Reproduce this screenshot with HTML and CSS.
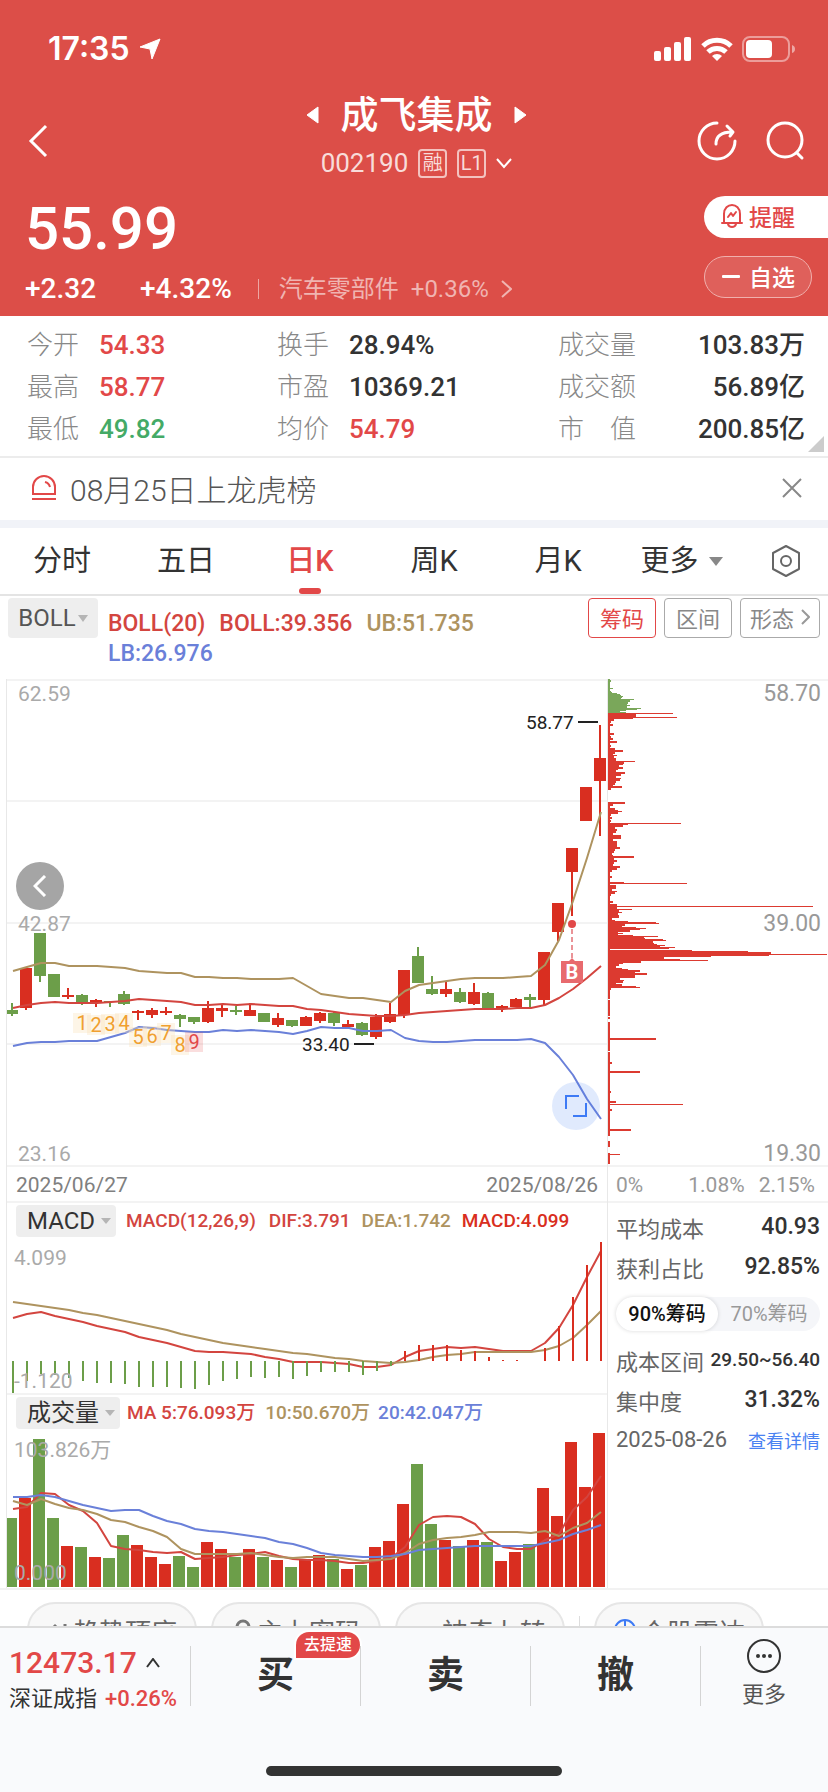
FILE: index.html
```html
<!DOCTYPE html>
<html lang="zh-CN">

<head>
    <meta charset="UTF-8">
    <meta name="viewport" content="width=device-width, initial-scale=1.0">
    <title>成飞集成 002190</title>
    <link rel="stylesheet" href="styles.css">
</head>

<body>
    <header class="header">
        <div class="status-bar">
            <div class="status-time">
                <span>17:35</span>
                <svg width="22" height="22" viewBox="0 0 22 22"><path d="M21 1 L13 21 L11 11 L1 9 Z" fill="#fff" stroke="#fff" stroke-width="1" stroke-linejoin="round"/></svg>
            </div>
            <div class="status-icons">
                <svg width="38" height="24" viewBox="0 0 38 24" fill="#fff">
                    <rect x="0" y="14" width="7" height="10" rx="2"/>
                    <rect x="10" y="10" width="7" height="14" rx="2"/>
                    <rect x="20" y="5" width="7" height="19" rx="2"/>
                    <rect x="30" y="0" width="7" height="24" rx="2"/>
                </svg>
                <svg width="32" height="24" viewBox="0 0 32 24" fill="none" stroke="#fff" stroke-width="5">
                    <path d="M2 9 A20 20 0 0 1 30 9"/>
                    <path d="M7 15 A13 13 0 0 1 25 15"/>
                    <path d="M16 24 L11 19 A7 7 0 0 1 21 19 Z" fill="#fff" stroke="none"/>
                </svg>
                <svg width="54" height="26" viewBox="0 0 54 26">
                    <rect x="1" y="1" width="46" height="24" rx="7" fill="none" stroke="#fff" stroke-opacity=".45" stroke-width="2"/>
                    <rect x="4" y="4" width="26" height="18" rx="4" fill="#fff"/>
                    <path d="M50 9 Q53 10 53 13 Q53 16 50 17 Z" fill="#fff" fill-opacity=".5"/>
                </svg>
            </div>
        </div>

        <div class="title-row">
            <button class="icon-btn" aria-label="返回">
                <svg width="20" height="34" viewBox="0 0 20 34" fill="none" stroke="#fff" stroke-width="3"><path d="M18 2 L3 17 L18 32"/></svg>
            </button>
            <div class="title">
                <div class="title-name">
                    <svg width="14" height="18" viewBox="0 0 14 18"><path d="M12 1 V17 L1 9 Z" fill="#fff" stroke="#fff" stroke-linejoin="round"/></svg>
                    <h1>成飞集成</h1>
                    <svg width="14" height="18" viewBox="0 0 14 18"><path d="M2 1 V17 L13 9 Z" fill="#fff" stroke="#fff" stroke-linejoin="round"/></svg>
                </div>
                <div class="title-code">
                    <span>002190</span>
                    <span class="tag">融</span>
                    <span class="tag">L1</span>
                    <svg width="16" height="11" viewBox="0 0 16 11" fill="none" stroke="#fff" stroke-width="2"><path d="M1 1 L8 9 L15 1"/></svg>
                </div>
            </div>
            <div class="title-actions">
                <button class="icon-btn" aria-label="分享">
                    <svg width="40" height="40" viewBox="0 0 40 40" fill="none" stroke="#fff" stroke-width="3" stroke-linecap="round" stroke-linejoin="round">
                        <path d="M20 2 A18 18 0 1 0 38 20"/>
                        <path d="M19 23 C19 14 25 11 35 11 M30 5 L36 11 L33 15"/>
                    </svg>
                </button>
                <button class="icon-btn" aria-label="搜索">
                    <svg width="40" height="40" viewBox="0 0 40 40" fill="none" stroke="#fff" stroke-width="3" stroke-linecap="round"><circle cx="20" cy="19" r="17"/><path d="M32 32 L37 37"/></svg>
                </button>
            </div>
        </div>

        <div class="quote">
            <div class="quote-main">
                <div class="price">55.99</div>
                <div class="change">
                    <span>+2.32</span>
                    <span class="change-pct">+4.32%</span>
                    <a href="#sector" class="sector">
                        <span>汽车零部件</span>
                        <span>+0.36%</span>
                        <svg width="11" height="18" viewBox="0 0 11 18" fill="none" stroke="currentColor" stroke-width="2"><path d="M1 1 L10 9 L1 17"/></svg>
                    </a>
                </div>
            </div>
            <div class="quote-actions">
                <button class="alert-btn">
                    <svg width="22" height="24" viewBox="0 0 22 24" fill="none" stroke="#e24848" stroke-width="2" stroke-linecap="round" stroke-linejoin="round">
                        <path d="M1 19 H21 M3 19 V10 C3 -2 19 -2 19 10 V19 M7 20 C8 24 14 24 15 20"/>
                        <path d="M7 13 L10 9 L12 12 L15 8"/>
                    </svg>
                    提醒
                </button>
                <button class="watch-btn">
                    <svg width="18" height="4" viewBox="0 0 18 4"><rect width="18" height="3" y="1" rx="1" fill="#fff"/></svg>
                    自选
                </button>
            </div>
        </div>
    </header>

    <main>
        <dl class="stats">
            <div><dt>今开</dt><dd class="up">54.33</dd></div>
            <div><dt>换手</dt><dd>28.94%</dd></div>
            <div class="wide"><dt>成交量</dt><dd>103.83万</dd></div>
            <div><dt>最高</dt><dd class="up">58.77</dd></div>
            <div><dt>市盈</dt><dd>10369.21</dd></div>
            <div class="wide"><dt>成交额</dt><dd>56.89亿</dd></div>
            <div><dt>最低</dt><dd class="down">49.82</dd></div>
            <div><dt>均价</dt><dd class="up">54.79</dd></div>
            <div class="wide"><dt>市　值</dt><dd>200.85亿</dd></div>
        </dl>

        <div class="notice">
            <svg width="26" height="26" viewBox="0 0 26 26" fill="none" stroke="#e24848" stroke-width="2">
                <path d="M2 19 V12 A11 11 0 0 1 24 12 V19 Z M1 24 H25"/>
                <path d="M14 7 Q18 8 19 12"/>
            </svg>
            <span>08月25日上龙虎榜</span>
            <button class="icon-btn" aria-label="关闭">
                <svg width="20" height="20" viewBox="0 0 20 20" stroke="#888" stroke-width="2"><path d="M1 1 L19 19 M19 1 L1 19"/></svg>
            </button>
        </div>

        <nav class="tabs">
            <a href="#minute">分时</a>
            <a href="#five">五日</a>
            <a href="#day" class="active">日K</a>
            <a href="#week">周K</a>
            <a href="#month">月K</a>
            <a href="#more">更多<svg width="16" height="11" viewBox="0 0 16 11"><path d="M1 1 H15 L8 10 Z" fill="#888"/></svg></a>
            <button class="icon-btn" aria-label="设置">
                <svg width="30" height="32" viewBox="0 0 30 32" fill="none" stroke="#666" stroke-width="2" stroke-linejoin="round"><path d="M15 1 L28 8 V24 L15 31 L2 24 V8 Z"/><circle cx="15" cy="16" r="5"/></svg>
            </button>
        </nav>

        <div class="toolbar">
            <button class="picker boll">BOLL<svg width="10" height="7" viewBox="0 0 10 7"><path d="M0 0 H10 L5 7 Z" fill="#b5b5b5"/></svg></button>
            <div class="boll-values">
                <span class="c-red">BOLL(20)</span>
                <span class="c-red">BOLL:39.356</span>
                <span class="c-tan">UB:51.735</span>
                <span class="c-blue">LB:26.976</span>
            </div>
            <div class="toolbar-btns">
                <button class="active">筹码</button>
                <button>区间</button>
                <button>形态 <svg width="9" height="16" viewBox="0 0 9 16" fill="none" stroke="#999" stroke-width="2"><path d="M1 1 L8 8 L1 15"/></svg></button>
            </div>
        </div>

        <section class="board">
            <div class="panels">
                <div class="kline">
                    <svg class="chart" viewBox="7 0 600 488">
                        <g class="grid"><path d="M7 1 H607 M7 122 H607 M7 244 H607 M7 365 H607 M7 487 H607"/></g>
                        <g id="candles"></g>
                        <g id="kLines"></g>
                        <g id="nineTurn"></g>
                        <g class="axis">
                            <text x="18" y="22">62.59</text>
                            <text x="18" y="252">42.87</text>
                            <text x="18" y="482">23.16</text>
                        </g>
                        <g class="mark">
                            <text x="526" y="50">58.77</text>
                            <path d="M578 43 H598"/>
                            <text x="302" y="372">33.40</text>
                            <path d="M354 365 H374"/>
                        </g>
                        <path d="M572 250 V282" stroke="#ea9397" stroke-width="2" stroke-dasharray="5 3"/>
                        <circle cx="572" cy="245" r="4" fill="#e24848"/>
                        <path d="M561 282 H569 L572 279 L575 282 H583 V304 H561 Z" fill="#e86a6e"/>
                        <text x="572" y="300" class="buy-mark">B</text>
                    </svg>
                    <button class="round prev" aria-label="向前">
                        <svg width="14" height="22" viewBox="0 0 14 22" fill="none" stroke="#fff" stroke-width="3"><path d="M12 1 L2 11 L12 21"/></svg>
                    </button>
                    <button class="round expand" aria-label="全屏">
                        <svg width="22" height="22" viewBox="0 0 22 22" fill="none" stroke="#3d7af5" stroke-width="2"><path d="M1 14 V1 H14 M8 21 H21 V8"/></svg>
                    </button>
                </div>
                <div class="dates">
                    <span>2025/06/27</span>
                    <span>2025/08/26</span>
                </div>

                <div class="sub-panel">
                    <div class="legend">
                        <button class="picker">MACD<svg width="10" height="6" viewBox="0 0 10 6"><path d="M0 0 H10 L5 6 Z" fill="#b5b5b5"/></svg></button>
                        <span class="c-red">MACD(12,26,9)</span>
                        <span class="c-red">DIF:3.791</span>
                        <span class="c-tan">DEA:1.742</span>
                        <span class="c-up">MACD:4.099</span>
                    </div>
                    <svg class="chart" viewBox="7 36 600 154">
                        <g id="macd"></g>
                        <g class="axis">
                            <text x="14" y="62">4.099</text>
                            <text x="14" y="185">-1.120</text>
                        </g>
                    </svg>
                </div>

                <div class="sub-panel">
                    <div class="legend volume-legend">
                        <button class="picker">成交量<svg width="10" height="6" viewBox="0 0 10 6"><path d="M0 0 H10 L5 6 Z" fill="#b5b5b5"/></svg></button>
                        <span class="c-red">MA 5:76.093万</span>
                        <span class="c-tan">10:50.670万</span>
                        <span class="c-blue">20:42.047万</span>
                    </div>
                    <svg class="chart" viewBox="7 36 600 157">
                        <g id="volume"></g>
                        <g class="axis">
                            <text x="14" y="62">103.826万</text>
                            <text x="14" y="185">0.000</text>
                        </g>
                    </svg>
                </div>
            </div>

            <div class="chips">
                <svg class="chart" viewBox="0 0 220 488">
                    <g class="grid"><path d="M0 1 H220 M0 487 H220"/></g>
                    <g id="chipRows"></g>
                    <g class="axis chip-axis">
                        <text x="213" y="22">58.70</text>
                        <text x="213" y="252">39.00</text>
                        <text x="213" y="482">19.30</text>
                    </g>
                </svg>
                <div class="chip-scale">
                    <span>0%</span>
                    <span>1.08%</span>
                    <span>2.15%</span>
                </div>
                <div class="chip-info">
                    <div class="row"><span>平均成本</span><b>40.93</b></div>
                    <div class="row"><span>获利占比</span><b>92.85%</b></div>
                    <div class="switch">
                        <button class="active">90%筹码</button>
                        <button>70%筹码</button>
                    </div>
                    <div class="row"><span>成本区间</span><b class="small">29.50~56.40</b></div>
                    <div class="row"><span>集中度</span><b>31.32%</b></div>
                    <div class="row"><span>2025-08-26</span><a href="#detail">查看详情</a></div>
                </div>
            </div>
        </section>

        <div class="pills">
            <button><svg width="22" height="24" viewBox="0 0 22 24" fill="none" stroke="#777" stroke-width="3"><path d="M2 14 L8 8 L14 14 M8 9 V22 M18 6 V22"/></svg>趋势顶底</button>
            <button><svg width="22" height="24" viewBox="0 0 22 24" fill="none" stroke="#777" stroke-width="3"><circle cx="12" cy="9" r="6"/><path d="M12 15 V23"/></svg>主力密码</button>
            <button><svg width="24" height="24" viewBox="0 0 24 24" fill="none" stroke="#3d7af5" stroke-width="3"><path d="M1 11 H7 L12 18 L17 11 H23"/></svg>神奇九转</button>
            <i class="divider"></i>
            <button><svg width="24" height="24" viewBox="0 0 24 24" fill="none" stroke="#3d7af5" stroke-width="2"><circle cx="12" cy="12" r="10"/><path d="M12 2 V12 M6 12 H18"/></svg>个股雷达</button>
        </div>
    </main>

    <footer class="footer">
        <div class="trade-bar">
            <div class="index">
                <div class="index-value">12473.17<svg width="14" height="10" viewBox="0 0 14 10" fill="none" stroke="#333" stroke-width="2"><path d="M1 9 L7 1 L13 9"/></svg></div>
                <div class="index-name">深证成指<span class="up">+0.26%</span></div>
            </div>
            <button class="trade">买<span class="badge">去提速</span></button>
            <button class="trade">卖</button>
            <button class="trade">撤</button>
            <button class="more">
                <svg width="34" height="34" viewBox="0 0 34 34" fill="none" stroke="#333" stroke-width="2"><circle cx="17" cy="17" r="16"/><g fill="#333" stroke="none"><circle cx="11" cy="17" r="2"/><circle cx="17" cy="17" r="2"/><circle cx="23" cy="17" r="2"/></g></svg>
                更多
            </button>
        </div>
        <div class="home-bar"></div>
    </footer>

    <script src="script.js"></script>
</body>

</html>
```

FILE: styles.css
```css
* {
    box-sizing: border-box;
}

body {
    font-family: Roboto, "Noto Sans CJK SC", sans-serif;
    margin: 0;
    height: 100vh;
    display: flex;
    flex-direction: column;
    background-color: #fff;
    color: #333;
}

button {
    font-family: inherit;
    padding: 0;
    border: none;
    background: none;
    color: inherit;
    cursor: pointer;
}

a {
    color: inherit;
    text-decoration: none;
}

svg {
    display: block;
    flex: none;
}

main {
    flex: 1;
    min-height: 0;
    overflow: hidden auto;
    scrollbar-width: none;
}

.up {
    color: #e24848;
}

.down {
    color: #44aa66;
}

.c-red {
    color: #d3453f;
}

.c-tan {
    color: #ae935f;
}

.c-blue {
    color: #6a80d9;
}

.c-up {
    color: #d92e20;
}

/* Header */
.header {
    flex: none;
    background-color: #dc4e48;
    color: #fff;
}

.status-bar {
    display: flex;
    justify-content: space-between;
    align-items: center;
    height: 88px;
    padding: 10px 32px 0 48px;
}

.status-time {
    display: flex;
    align-items: center;
    gap: 9px;
    font: 600 32px/1 Inter, sans-serif;
}

.status-icons {
    display: flex;
    align-items: center;
    gap: 9px;
}

.title-row {
    display: grid;
    grid-template-columns: 1fr auto 1fr;
    align-items: center;
    padding: 0 23px 0 28px;
}

.icon-btn {
    display: flex;
    align-items: center;
    justify-content: center;
}

.title-row > .icon-btn {
    justify-self: start;
    padding-top: 10px;
}

.title-name {
    display: flex;
    align-items: center;
    justify-content: center;
    gap: 20px;
    height: 54px;
}

.title-name h1 {
    margin: 0;
    font-size: 38px;
    font-weight: 500;
    line-height: 54px;
}

.title-code {
    display: flex;
    align-items: center;
    justify-content: center;
    gap: 10px;
    height: 42px;
    font-size: 26px;
    color: #f8dcda;
}

.tag {
    width: 29px;
    height: 29px;
    border: 2px solid #f3c3c0;
    border-radius: 4px;
    font-size: 20px;
    line-height: 25px;
    text-align: center;
}

.title-actions {
    display: flex;
    justify-content: flex-end;
    gap: 28px;
    padding-top: 10px;
}

.quote {
    display: flex;
    justify-content: space-between;
    height: 132px;
    padding: 12px 0 0 25px;
}

.price {
    font-size: 60px;
    font-weight: 500;
    line-height: 66px;
}

.change {
    display: flex;
    align-items: center;
    font-size: 28px;
    font-weight: 500;
    line-height: 54px;
}

.change-pct {
    margin-left: 44px;
}

.sector {
    display: flex;
    align-items: center;
    gap: 12px;
    height: 20px;
    margin-left: 26px;
    padding-left: 20px;
    border-left: 1px solid #eda6a3;
    color: #f0b4b1;
    font-size: 24px;
    font-weight: 400;
}

.quote-actions {
    display: flex;
    flex-direction: column;
    gap: 18px;
    width: 124px;
}

.quote-actions button {
    display: flex;
    align-items: center;
    gap: 6px;
    height: 42px;
    padding: 0 0 2px 17px;
    font-size: 23px;
    font-weight: 500;
}

.quote-actions .alert-btn {
    border-radius: 21px 0 0 21px;
    background-color: #fff;
    color: #e24848;
}

.quote-actions .watch-btn {
    width: 108px;
    gap: 9px;
    border: 1px solid #f0b0ad;
    border-radius: 21px;
    background-color: #df605b;
}

/* Stats */
.stats {
    position: relative;
    display: grid;
    grid-template-columns: 250fr 281fr 247fr;
    margin: 0;
    padding: 8px 23px 6px 27px;
    border-bottom: 2px solid #ececec;
    font-size: 26px;
    line-height: 42px;
}

.stats::after {
    content: "";
    position: absolute;
    right: 4px;
    bottom: 4px;
    border-left: 16px solid transparent;
    border-bottom: 16px solid #ccc;
}

.stats div {
    display: flex;
    gap: 20px;
}

.stats .wide {
    justify-content: space-between;
}

.stats dt {
    color: #888;
    font-weight: 300;
}

.stats dd {
    margin: 0;
    font-weight: 500;
}

.notice {
    display: flex;
    align-items: center;
    height: 70px;
    padding: 0 26px 2px 31px;
    border-bottom: 8px solid #f1f3f8;
    font-size: 30px;
    font-weight: 300;
    color: #555;
}

.notice span {
    flex: 1;
    margin-left: 13px;
}

/* Tabs */
.tabs {
    display: grid;
    grid-template-columns: repeat(6, 124fr) 84fr;
    height: 68px;
    border-bottom: 2px solid #e4e4e4;
    font-size: 29px;
    line-height: 66px;
    text-align: center;
}

.tabs a {
    position: relative;
    display: flex;
    align-items: center;
    justify-content: center;
    gap: 9px;
}

.tabs .active {
    color: #e24848;
    font-weight: 500;
}

.tabs .active::after {
    content: "";
    position: absolute;
    bottom: 0;
    width: 22px;
    height: 6px;
    border-radius: 3px;
    background-color: #e24848;
}

/* Indicator toolbar */
.toolbar {
    display: flex;
    align-items: flex-start;
    height: 83px;
    padding: 2px 8px 0;
}

.picker {
    display: flex;
    align-items: center;
    justify-content: center;
    gap: 6px;
    flex: none;
    height: 32px;
    padding: 0 5px 0 11px;
    border-radius: 4px;
    background-color: #eee;
    font-size: 24px;
    line-height: 32px;
}

.picker.boll {
    width: 90px;
    height: 40px;
    padding: 0;
    gap: 2px;
    color: #555;
}

.boll-values {
    display: flex;
    flex-wrap: wrap;
    flex: 1;
    column-gap: 14px;
    margin: 11px 20px 0 10px;
    font-size: 23px;
    font-weight: 500;
    line-height: 30px;
}

.toolbar-btns {
    display: flex;
    gap: 8px;
}

.toolbar-btns button {
    display: flex;
    align-items: center;
    justify-content: center;
    gap: 7px;
    min-width: 68px;
    height: 40px;
    padding: 0 9px 3px;
    border: 1px solid #aaa;
    border-radius: 4px;
    color: #888;
    font-size: 22px;
}

.toolbar-btns .active {
    border-color: #e24848;
    color: #e24848;
}

/* Charts */
.board {
    display: grid;
    grid-template-columns: minmax(0, 608fr) minmax(0, 220fr);
    border-bottom: 2px solid #f2f2f2;
}

.panels {
    margin-left: 6px;
    border-left: 1px solid #e8e8e8;
    border-right: 1px solid #e8e8e8;
}

.chart {
    width: 100%;
    height: auto;
}

.grid path {
    stroke: #f3f3f3;
    stroke-width: 2;
}

.axis text {
    fill: #aaa;
    font-size: 21px;
}

.axis.chip-axis text {
    fill: #999;
    font-size: 23px;
    text-anchor: end;
}

.mark text {
    fill: #222;
    font-size: 19px;
}

.mark path {
    stroke: #222;
    stroke-width: 2;
}

.buy-mark {
    fill: #fff;
    font-size: 20px;
    font-weight: 700;
    text-anchor: middle;
}

.turn {
    fill: #f0a030;
    font-size: 20px;
    text-anchor: middle;
}

.turn.last {
    fill: #e24848;
}

.line {
    fill: none;
    stroke-width: 2;
    stroke-linejoin: round;
}

.kline {
    position: relative;
}

.round {
    position: absolute;
    display: flex;
    align-items: center;
    justify-content: center;
    width: 48px;
    height: 48px;
    border-radius: 50%;
}

.prev {
    left: 9px;
    top: 183px;
    background-color: #a5a5a5;
}

.expand {
    right: 7px;
    bottom: 37px;
    background-color: rgba(61, 122, 245, 0.16);
}

.dates {
    display: flex;
    justify-content: space-between;
    padding: 2px 9px 0;
    color: #808080;
    font-size: 21px;
    line-height: 32px;
}

.sub-panel {
    border-top: 2px solid #f3f3f3;
}

.legend {
    display: flex;
    align-items: center;
    gap: 13px;
    height: 36px;
    padding-left: 9px;
    font-size: 19px;
    font-weight: 500;
    line-height: 32px;
    white-space: nowrap;
}

.legend .picker {
    margin-right: -3px;
}

.legend span:nth-of-type(n + 3) {
    margin-left: -2px;
}

.volume-legend {
    gap: 10px;
}

/* Chip distribution */
.chip-scale {
    display: flex;
    justify-content: space-between;
    padding: 2px 13px 0 8px;
    color: #999;
    font-size: 21px;
    line-height: 32px;
}

.chip-scale span:nth-child(2) {
    margin-left: 31px;
}

.chip-info {
    padding: 4px 8px 0;
    border-top: 2px solid #f3f3f3;
}

.row {
    display: flex;
    justify-content: space-between;
    align-items: center;
    height: 40px;
    padding-bottom: 1px;
    color: #666;
    font-size: 22px;
    white-space: nowrap;
}

.row b {
    color: #333;
    font-size: 23px;
    font-weight: 500;
}

.row .small {
    font-size: 19px;
}

.row a {
    color: #4a82f2;
    font-size: 18px;
}

.switch {
    display: flex;
    height: 34px;
    margin: 10px 0 9px;
    border-radius: 17px;
    background-color: #f5f6f9;
}

.switch button {
    flex: 1;
    border-radius: 17px;
    color: #999;
    font-size: 20px;
    line-height: 32px;
    white-space: nowrap;
}

.switch .active {
    background-color: #fff;
    color: #111;
    font-weight: 500;
    box-shadow: 0 0 4px rgba(0, 0, 0, 0.15);
}

/* Feature pills */
.pills {
    display: flex;
    gap: 14px;
    padding: 12px 27px 20px;
}

.pills button {
    display: flex;
    align-items: center;
    justify-content: center;
    gap: 4px;
    width: 170px;
    height: 56px;
    border: 2px solid #e6e6e6;
    border-radius: 28px;
    background-color: #f8f8f8;
    color: #666;
    font-size: 26px;
    white-space: nowrap;
}

.divider {
    width: 1px;
    height: 30px;
    margin-top: 14px;
    background-color: #ddd;
}

/* Footer */
.footer {
    flex: none;
    border-top: 2px solid #dcdcdc;
    background-color: #f9fafc;
}

.trade-bar {
    display: grid;
    grid-template-columns: 190fr 170fr 170fr 170fr 128fr;
    align-items: center;
    height: 96px;
}

.index {
    padding: 8px 0 0 9px;
    white-space: nowrap;
}

.index-value {
    display: flex;
    align-items: center;
    gap: 9px;
    color: #e24848;
    font-size: 30px;
    font-weight: 500;
    line-height: 38px;
}

.index-name {
    display: flex;
    gap: 8px;
    font-size: 22px;
    line-height: 34px;
}

.index-name .up {
    font-weight: 500;
}

.trade {
    position: relative;
    height: 60px;
    border-left: 1px solid #d4d4d4;
    font-size: 37px;
    font-weight: 700;
    line-height: 58px;
}

.badge {
    position: absolute;
    right: 0;
    top: -14px;
    padding: 0 8px;
    border-radius: 13px 13px 13px 0;
    background-color: #e24848;
    box-shadow: 0 0 0 2px #fff;
    color: #fff;
    font-size: 16px;
    font-weight: 500;
    line-height: 26px;
}

.more {
    position: relative;
    display: flex;
    flex-direction: column;
    align-items: center;
    padding-top: 4px;
    color: #555;
    font-size: 22px;
    line-height: 44px;
}

.more::before {
    content: "";
    position: absolute;
    left: 0;
    top: 11px;
    height: 60px;
    border-left: 1px solid #d4d4d4;
}

.home-bar {
    width: 296px;
    height: 10px;
    margin: 42px auto 16px;
    border-radius: 5px;
    background-color: #333;
}
```

FILE: script.js
```js
const RED = '#d92e20';
const GREEN = '#6c9e49';
const STEP = 14;

// body top, body bottom, high, low, direction
const candles = [
    [331, 335, 324, 337, 0], [289, 329, 289, 331, 1], [254, 297, 254, 303, 0], [295, 318, 295, 318, 0],
    [316, 318, 309, 320, 1], [316, 325, 315, 326, 0], [321, 323, 320, 328, 1], [322, 323, 322, 328, 0],
    [315, 325, 312, 326, 0], [332, 334, 331, 341, 1], [331, 336, 329, 339, 1], [332, 334, 328, 336, 1],
    [336, 340, 335, 348, 0], [338, 343, 338, 345, 0], [329, 343, 322, 344, 1], [329, 332, 325, 338, 1],
    [331, 333, 327, 336, 0], [331, 337, 324, 337, 1], [334, 343, 334, 343, 0], [339, 346, 334, 348, 1],
    [341, 347, 341, 348, 0], [338, 347, 337, 347, 1], [334, 342, 333, 344, 1], [334, 344, 333, 347, 0],
    [345, 348, 341, 348, 1], [344, 356, 343, 357, 0], [338, 358, 335, 360, 1], [335, 343, 324, 344, 1],
    [291, 336, 291, 339, 1], [277, 304, 268, 304, 0], [310, 315, 297, 316, 0], [310, 315, 303, 318, 1],
    [313, 323, 309, 324, 0], [313, 325, 304, 326, 1], [314, 329, 313, 329, 0], [327, 330, 326, 333, 1],
    [320, 328, 319, 328, 1], [318, 321, 315, 328, 0], [273, 321, 273, 326, 1], [224, 253, 224, 262, 1],
    [169, 193, 169, 237, 1], [108, 142, 108, 142, 1], [79, 102, 46, 157, 1]
];

const ub = [292, 288, 284, 284, 287, 287, 287, 288, 289, 292, 293, 294, 294, 298, 298, 299, 299, 300, 300, 300, 299, 307, 315, 317, 319, 319, 321, 323, 312, 306, 304, 302, 300, 299, 299, 299, 298, 297, 286, 261, 222, 179, 133];
const mid = [329, 326, 324, 323, 324, 324, 324, 323, 322, 320, 321, 322, 323, 326, 326, 325, 326, 325, 326, 327, 327, 330, 331, 333, 335, 336, 337, 337, 336, 334, 333, 332, 331, 330, 330, 330, 329, 329, 326, 319, 310, 299, 287];
const lb = [367, 364, 363, 363, 362, 362, 362, 358, 354, 348, 349, 351, 352, 353, 353, 351, 352, 351, 352, 353, 355, 352, 348, 349, 349, 352, 352, 351, 359, 362, 363, 363, 362, 361, 361, 361, 361, 360, 364, 378, 396, 420, 440];

const macdBars = [191, 178, 171, 172, 175, 178, 180, 180, 181, 184, 184, 184, 185, 186, 182, 178, 176, 174, 175, 174, 176, 173, 169, 169, 169, 172, 168, 163, 148, 142, 142, 142, 147, 148, 154, 157, 157, 158, 145, 123, 94, 62, 39];
const dea = [99, 101, 103, 105, 107, 110, 112, 115, 118, 121, 124, 127, 131, 134, 137, 140, 142, 144, 146, 148, 150, 151, 153, 155, 156, 158, 159, 160, 159, 157, 154, 152, 151, 149, 149, 149, 149, 149, 147, 143, 135, 122, 108];
const dif = [115, 111, 109, 113, 116, 119, 123, 126, 129, 134, 137, 140, 144, 148, 149, 149, 150, 151, 154, 156, 159, 159, 159, 160, 161, 164, 164, 162, 154, 148, 146, 144, 145, 144, 146, 148, 148, 148, 140, 125, 102, 74, 48];

const volumes = [123, 103, 44, 123, 151, 152, 162, 163, 140, 150, 162, 169, 161, 172, 147, 154, 162, 154, 162, 165, 172, 165, 160, 164, 174, 170, 152, 146, 109, 69, 129, 145, 151, 145, 147, 166, 157, 149, 93, 121, 47, 92, 38];
const ma5 = [114, 112, 98, 99, 110, 116, 128, 151, 154, 155, 157, 158, 157, 164, 163, 162, 160, 159, 157, 161, 164, 165, 165, 166, 168, 168, 166, 163, 152, 130, 122, 121, 122, 129, 144, 152, 154, 154, 145, 139, 115, 102, 81];
const ma10 = [106, 110, 104, 109, 113, 115, 119, 125, 127, 132, 136, 142, 154, 159, 159, 159, 159, 158, 160, 162, 163, 162, 162, 162, 164, 166, 165, 164, 158, 149, 145, 143, 142, 140, 137, 137, 137, 138, 136, 141, 133, 128, 117];
const ma20 = [102, 102, 100, 102, 106, 110, 113, 116, 115, 115, 121, 126, 129, 134, 136, 137, 139, 141, 143, 147, 149, 153, 158, 160, 161, 162, 162, 161, 159, 155, 154, 153, 152, 151, 151, 151, 151, 151, 148, 145, 139, 135, 130];

// chip distribution rows: y, length
const chipsLoss = [[0, 2], [1, 3], [3, 2], [5, 2], [7, 2], [9, 5], [10, 2], [12, 3], [13, 4], [14, 9], [15, 12], [16, 13], [17, 15], [18, 14], [19, 13], [20, 26], [21, 22], [23, 20], [25, 19], [26, 22], [27, 19], [29, 33], [30, 29], [31, 18], [32, 12], [33, 18]];
const chipsGain = [
    [34, 65], [35, 28], [37, 28], [38, 69], [39, 25], [40, 6], [42, 3], [45, 5], [50, 2], [54, 6], [57, 3], [59, 5], [62, 9], [66, 3], [69, 7], [71, 15], [73, 7], [75, 5], [76, 9], [77, 6], [79, 8],
    [81, 8], [82, 27], [83, 16], [85, 15], [86, 11], [88, 15], [90, 10], [91, 8], [93, 17], [95, 13], [97, 8], [99, 13], [100, 12], [102, 8], [104, 7], [106, 5], [107, 14], [109, 3],
    [123, 17], [125, 5], [129, 7], [131, 10], [132, 14], [133, 10], [135, 3], [138, 4], [141, 3], [144, 73], [145, 20], [146, 15], [148, 7], [150, 9], [152, 8], [154, 5], [156, 13], [158, 13],
    [160, 5], [162, 9], [164, 9], [166, 9], [168, 12], [170, 7], [172, 6], [174, 4], [176, 5], [177, 26], [179, 6], [181, 9], [183, 6], [185, 5], [187, 12], [189, 9], [191, 4], [197, 4], [203, 16],
    [204, 79], [206, 8], [208, 8], [210, 4], [212, 9], [213, 7], [215, 3], [222, 5], [225, 9], [227, 205], [228, 9], [230, 24], [231, 11], [233, 14], [234, 10], [236, 11], [237, 11], [239, 4],
    [241, 7], [242, 20], [243, 48], [244, 51], [245, 17], [247, 14], [248, 28], [249, 38], [250, 32], [251, 22], [253, 10], [254, 15], [255, 10], [256, 25], [257, 50], [258, 36], [259, 37],
    [260, 55], [261, 58], [262, 45], [264, 46], [265, 49], [266, 57], [267, 52], [268, 67], [269, 61], [271, 84], [272, 140], [273, 163], [274, 163], [275, 219], [276, 161], [277, 103],
    [278, 56], [279, 56], [280, 72], [281, 100], [282, 33], [284, 15], [285, 11], [287, 8], [289, 14], [290, 20], [291, 32], [293, 27], [294, 39], [296, 27], [298, 27], [299, 12], [301, 16], [302, 15],
    [304, 8], [305, 14], [307, 28], [308, 32], [309, 3], [359, 48], [383, 4], [392, 32], [412, 3], [422, 8], [425, 75], [430, 4], [450, 23], [475, 12]
];
const chipsBase = [[34, 110], [123, 320], [321, 337], [338, 340], [343, 372], [373, 457], [462, 468], [474, 485]];

function add(parent, name, attrs, text) {
    const el = document.createElementNS('http://www.w3.org/2000/svg', name);
    for (const key in attrs) el.setAttribute(key, attrs[key]);
    if (text) el.textContent = text;
    parent.appendChild(el);
}

function rect(parent, x, y, width, height, fill) {
    add(parent, 'rect', { x, y, width, height, fill });
}

function line(parent, values, stroke) {
    const points = values.map((y, i) => (13 + i * STEP) + ',' + y).join(' ');
    add(parent, 'polyline', { points, stroke, class: 'line' });
}

const $ = id => document.getElementById(id);

candles.forEach(([top, bottom, high, low, up], i) => {
    const x = 12 + i * STEP;
    const color = up ? RED : GREEN;
    rect($('candles'), x - 6, top, 12, bottom - top, color);
    rect($('candles'), x - 1, high, 2, low - high, color);
});
line($('kLines'), ub, '#ae935f');
line($('kLines'), mid, '#d3453f');
line($('kLines'), lb, '#6a80d9');

[334, 336, 335, 334, 348, 347, 344, 356, 353].forEach((y, i) => {
    const x = 82 + i * STEP;
    const last = i === 8;
    rect($('nineTurn'), x - 9, y, 18, 20, last ? 'rgba(226,72,72,.18)' : 'rgba(250,225,185,.35)');
    add($('nineTurn'), 'text', { x, y: y + 17, class: last ? 'turn last' : 'turn' }, String(i + 1));
});

line($('macd'), dif, '#d3453f');
line($('macd'), dea, '#ae935f');
macdBars.forEach((y, i) => {
    const up = y < 158;
    rect($('macd'), 12 + i * STEP, up ? y : 158, 2, Math.abs(158 - y), up ? RED : GREEN);
});

volumes.forEach((y, i) => {
    const x = Math.max(5 + i * STEP, 7);
    rect($('volume'), x, y, 17 + i * STEP - x, 192 - y, candles[i][4] ? RED : GREEN);
});
line($('volume'), ma5, '#d3453f');
line($('volume'), ma10, '#ae935f');
line($('volume'), ma20, '#6a80d9');

// long rows stay one unit thick, short ones fill up to the next row
function chipRows(rows, color) {
    rows.forEach(([y, width], i) => {
        const next = rows[i + 1] ? rows[i + 1][0] : y + 1;
        rect($('chipRows'), 0, y, width, width > 60 && width < 80 ? 1 : Math.min(next - y, 2), color);
    });
}
chipRows(chipsLoss, '#7aa75a');
chipRows(chipsGain, '#dc3a30');
chipsBase.forEach(([from, to]) => rect($('chipRows'), 0, from, 2, to - from, '#dc3a30'));
```
